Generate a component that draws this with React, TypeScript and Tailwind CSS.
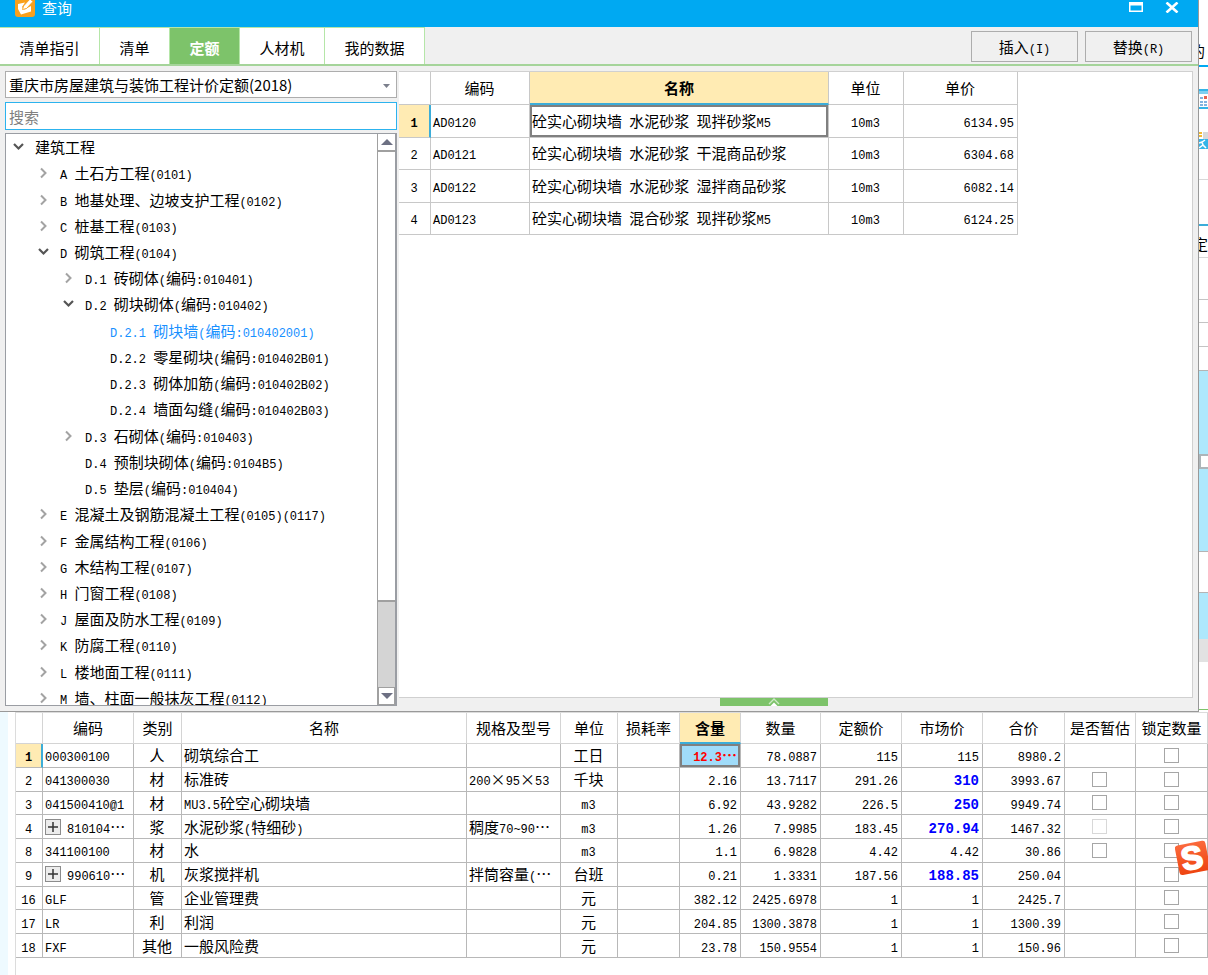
import React from "react";

type TreeNode = {
    label: string;
    level: number;
    state?: "open" | "closed";
    selected?: boolean;
};

const TREE: TreeNode[] = [
    { label: "建筑工程", level: 0, state: "open" },
    { label: "A 土石方工程(0101)", level: 1, state: "closed" },
    { label: "B 地基处理、边坡支护工程(0102)", level: 1, state: "closed" },
    { label: "C 桩基工程(0103)", level: 1, state: "closed" },
    { label: "D 砌筑工程(0104)", level: 1, state: "open" },
    { label: "D.1 砖砌体(编码:010401)", level: 2, state: "closed" },
    { label: "D.2 砌块砌体(编码:010402)", level: 2, state: "open" },
    { label: "D.2.1 砌块墙(编码:010402001)", level: 3, selected: true },
    { label: "D.2.2 零星砌块(编码:010402B01)", level: 3 },
    { label: "D.2.3 砌体加筋(编码:010402B02)", level: 3 },
    { label: "D.2.4 墙面勾缝(编码:010402B03)", level: 3 },
    { label: "D.3 石砌体(编码:010403)", level: 2, state: "closed" },
    { label: "D.4 预制块砌体(编码:0104B5)", level: 2 },
    { label: "D.5 垫层(编码:010404)", level: 2 },
    { label: "E 混凝土及钢筋混凝土工程(0105)(0117)", level: 1, state: "closed" },
    { label: "F 金属结构工程(0106)", level: 1, state: "closed" },
    { label: "G 木结构工程(0107)", level: 1, state: "closed" },
    { label: "H 门窗工程(0108)", level: 1, state: "closed" },
    { label: "J 屋面及防水工程(0109)", level: 1, state: "closed" },
    { label: "K 防腐工程(0110)", level: 1, state: "closed" },
    { label: "L 楼地面工程(0111)", level: 1, state: "closed" },
    { label: "M 墙、柱面一般抹灰工程(0112)", level: 1, state: "closed" },
];

const INDENT = ["pl-[7px]", "pl-[32px]", "pl-[57px]", "pl-[82px]"];

const TABS = [
    { label: "清单指引", width: "w-[100px]" },
    { label: "清单", width: "w-[70px]" },
    { label: "定额", width: "w-[70px]", active: true },
    { label: "人材机", width: "w-[85px]" },
    { label: "我的数据", width: "w-[100px]" },
];

const QUOTAS = [
    ["AD0120", "砼实心砌块墙 水泥砂浆 现拌砂浆M5", "10m3", "6134.95"],
    ["AD0121", "砼实心砌块墙 水泥砂浆 干混商品砂浆", "10m3", "6304.68"],
    ["AD0122", "砼实心砌块墙 水泥砂浆 湿拌商品砂浆", "10m3", "6082.14"],
    ["AD0123", "砼实心砌块墙 混合砂浆 现拌砂浆M5", "10m3", "6124.25"],
];

type Resource = {
    no: number;
    code: string;
    expandable?: boolean;
    kind: string;
    name: string;
    spec?: string;
    unit: string;
    content: string;
    amount: string;
    quotaPrice: string;
    marketPrice: string;
    adjusted?: boolean;
    total: string;
    estimate?: "on" | "disabled";
};

const RESOURCES: Resource[] = [
    { no: 1, code: "000300100", kind: "人", name: "砌筑综合工", unit: "工日", content: "12.3…", amount: "78.0887", quotaPrice: "115", marketPrice: "115", total: "8980.2" },
    { no: 2, code: "041300030", kind: "材", name: "标准砖", spec: "200×95×53", unit: "千块", content: "2.16", amount: "13.7117", quotaPrice: "291.26", marketPrice: "310", adjusted: true, total: "3993.67", estimate: "on" },
    { no: 3, code: "041500410@1", kind: "材", name: "MU3.5砼空心砌块墙", unit: "m3", content: "6.92", amount: "43.9282", quotaPrice: "226.5", marketPrice: "250", adjusted: true, total: "9949.74", estimate: "on" },
    { no: 4, code: "810104…", expandable: true, kind: "浆", name: "水泥砂浆(特细砂)", spec: "稠度70~90…", unit: "m3", content: "1.26", amount: "7.9985", quotaPrice: "183.45", marketPrice: "270.94", adjusted: true, total: "1467.32", estimate: "disabled" },
    { no: 8, code: "341100100", kind: "材", name: "水", unit: "m3", content: "1.1", amount: "6.9828", quotaPrice: "4.42", marketPrice: "4.42", total: "30.86", estimate: "on" },
    { no: 9, code: "990610…", expandable: true, kind: "机", name: "灰浆搅拌机", spec: "拌筒容量(…", unit: "台班", content: "0.21", amount: "1.3331", quotaPrice: "187.56", marketPrice: "188.85", adjusted: true, total: "250.04" },
    { no: 16, code: "GLF", kind: "管", name: "企业管理费", unit: "元", content: "382.12", amount: "2425.6978", quotaPrice: "1", marketPrice: "1", total: "2425.7" },
    { no: 17, code: "LR", kind: "利", name: "利润", unit: "元", content: "204.85", amount: "1300.3878", quotaPrice: "1", marketPrice: "1", total: "1300.39" },
    { no: 18, code: "FXF", kind: "其他", name: "一般风险费", unit: "元", content: "23.78", amount: "150.9554", quotaPrice: "1", marketPrice: "1", total: "150.96" },
];

const RESOURCE_HEADS = ["编码", "类别", "名称", "规格及型号", "单位", "损耗率", "含量", "数量", "定额价", "市场价", "合价", "是否暂估", "锁定数量"];

// Chinese at 15px, latin and digits in a smaller monospace
function Txt({ children }: { children: string }) {
    const parts = children.split(/([\x20-\x7e]+)/).filter(Boolean);
    return (
        <span className="whitespace-pre">
            {parts.map((part, i) =>
                /^[\x20-\x7e]+$/.test(part) ? (
                    <span key={i} className="font-['Liberation_Mono',monospace] text-[12px] leading-none">{part}</span>
                ) : (
                    part
                )
            )}
        </span>
    );
}

function Arrow({ state }: { state?: "open" | "closed" }) {
    if (!state) return <span className="w-[11px] shrink-0" />;
    return (
        <svg width="11" height="12" viewBox="0 0 11 12" fill="none" className="shrink-0">
            {state === "open" ? (
                <path d="M1 3l4.5 4.5L10 3" stroke="#555" strokeWidth="2.2" />
            ) : (
                <path d="M3 1.5L7.5 6 3 10.5" stroke="#a3a3a3" strokeWidth="2" />
            )}
        </svg>
    );
}

function TitleBar() {
    return (
        <header className="flex h-[27px] items-start bg-[#00a9f2] pr-[19px] pl-[15px] text-white">
            <svg width="20" height="17" viewBox="0 3 20 17">
                <rect width="20" height="20" rx="3" fill="#f9a01b" />
                <path d="M3 7l7-1.500-3 4.500 2.500 2.500L16 9v5.500L6 17.500 3 12z" fill="#fff" />
                <path d="M7.500 12.500l1-3.500L15 2l3 2.500-6.500 7z" fill="#fff" stroke="#f9a01b" strokeWidth="0.900" />
            </svg>
            <h1 className="ml-[7px] flex-1 text-[15px] leading-4">查询</h1>
            <button type="button" aria-label="最大化" className="mr-[22px] pt-[2px]">
                <svg width="14" height="10" viewBox="0 0 14 10">
                    <path d="M0 0h14v10H0zM1.500 3.500v5h11v-5z" fill="#fff" fillRule="evenodd" />
                </svg>
            </button>
            <button type="button" aria-label="关闭" className="pt-[2px]">
                <svg width="14" height="11" viewBox="0 0 14 11">
                    <path d="M1.500 0.500l11 10M12.500 0.500l-11 10" stroke="#fff" strokeWidth="2.600" />
                </svg>
            </button>
        </header>
    );
}

function TabBar() {
    return (
        <div className="flex h-[39px] items-stretch border-b-2 border-[#a5d49a] bg-[#f0f0f0] pr-[6px]">
            <nav className="flex flex-1">
                {TABS.map((tab) => (
                    <button
                        key={tab.label}
                        type="button"
                        className={`${tab.width} border-t border-r border-[#b5e6a8] pt-1 ${tab.active ? "bg-[#7dc36a] font-bold text-white" : "bg-white"}`}
                    >
                        {tab.label}
                    </button>
                ))}
            </nav>
            <div className="flex gap-[7px] pt-1 pb-[2px]">
                <button type="button" className="w-[107px] border border-[#adadad] bg-[#f0f0f0]"><Txt>插入(I)</Txt></button>
                <button type="button" className="w-[107px] border border-[#adadad] bg-[#f0f0f0]"><Txt>替换(R)</Txt></button>
            </div>
        </div>
    );
}

function ScrollBar() {
    return (
        <div className="flex w-[18px] shrink-0 flex-col border-l border-[#a0a0a0] bg-[#d4d4d4]">
            <button type="button" aria-label="向上" className="flex h-[18px] items-center justify-center border-b-2 border-[#a0a0a0] bg-white">
                <svg width="12" height="6" viewBox="0 0 12 6"><path d="M0 6l6-6 6 6z" fill="#6d7083" /></svg>
            </button>
            <div className="h-[450px] border-b-2 border-[#a0a0a0] bg-white" />
            <div className="flex-1" />
            <button type="button" aria-label="向下" className="flex h-[18px] items-center justify-center border border-[#a0a0a0] bg-white">
                <svg width="12" height="6" viewBox="0 0 12 6"><path d="M0 0l6 6 6-6z" fill="#6d7083" /></svg>
            </button>
        </div>
    );
}

function Sidebar() {
    return (
        <div className="flex w-[392px] shrink-0 flex-col">
            <div className="relative h-[27px] border border-[#adadad] bg-white">
                <select aria-label="定额库" className="h-full w-full appearance-none bg-transparent pl-[3px] text-[15px] outline-none">
                    <option>重庆市房屋建筑与装饰工程计价定额(2018)</option>
                </select>
                <svg width="7" height="4" viewBox="0 0 7 4" className="pointer-events-none absolute top-3 right-[6px]">
                    <path d="M0 0h7L3.500 4z" fill="#7b7f8c" />
                </svg>
            </div>
            <input
                type="text"
                aria-label="搜索"
                placeholder="搜索"
                className="mt-1 h-7 border border-[#2cb3ee] bg-white pl-[3px] text-[15px] outline-none placeholder:text-[#808080]"
            />
            <div className="mt-[3px] flex h-[573px] border border-r-2 border-[#9a9da3] bg-white">
                <div className="flex-1 overflow-hidden">
                    <ul className="grid h-[577px] auto-rows-fr">
                        {TREE.map((node) => (
                            <li key={node.label} className="flex">
                                <button
                                    type="button"
                                    className={`flex w-full items-center gap-[11px] ${INDENT[node.level]} ${node.selected ? "text-[#1890ff]" : ""}`}
                                >
                                    <Arrow state={node.state} />
                                    <Txt>{node.label}</Txt>
                                </button>
                            </li>
                        ))}
                    </ul>
                </div>
                <ScrollBar />
            </div>
        </div>
    );
}

const QCELL = "border-r border-b border-[#c8c8c8] pl-[2px] pr-[3px]";

function QuotaTable() {
    return (
        <table className="h-[163px] w-[619px] table-fixed border-separate border-spacing-0">
            <colgroup>
                <col className="w-[32px]" />
                <col className="w-[99px]" />
                <col />
                <col className="w-[75px]" />
                <col className="w-[114px]" />
            </colgroup>
            <thead>
                <tr className="h-[33px]">
                    <th className={QCELL} />
                    <th className={`${QCELL} font-normal`}>编码</th>
                    <th className="border-r border-b-2 border-r-[#c8c8c8] border-b-[#3cadd9] bg-[#ffebb3] font-bold">名称</th>
                    <th className={`${QCELL} font-normal`}>单位</th>
                    <th className={`${QCELL} font-normal`}>单价</th>
                </tr>
            </thead>
            <tbody>
                {QUOTAS.map(([code, name, unit, price], i) => (
                    <tr key={code}>
                        <td
                            className={
                                i === 0
                                    ? "border-r-2 border-b border-r-[#3cadd9] border-b-[#c8c8c8] bg-[#ffebb3] text-center font-bold"
                                    : `${QCELL} text-center`
                            }
                        >
                            <Txt>{String(i + 1)}</Txt>
                        </td>
                        <td className={QCELL}><Txt>{code}</Txt></td>
                        <td className={`${QCELL} ${i === 0 ? "shadow-[inset_0_0_0_2px_#808080]" : ""}`}><Txt>{name}</Txt></td>
                        <td className={`${QCELL} text-center`}><Txt>{unit}</Txt></td>
                        <td className={`${QCELL} text-right`}><Txt>{price}</Txt></td>
                    </tr>
                ))}
            </tbody>
        </table>
    );
}

function QueryDialog() {
    return (
        <section className="flex min-w-0 flex-1 flex-col border-r border-b border-[#999] bg-[#f0f0f0]">
            <TitleBar />
            <TabBar />
            <div className="flex gap-[2px] p-[5px]">
                <Sidebar />
                <div className="flex min-w-0 flex-1 flex-col">
                    <div className="flex-1 border border-l-0 border-[#d0d0d0] bg-white">
                        <QuotaTable />
                    </div>
                    <button type="button" aria-label="展开" className="ml-[321px] flex h-2 w-[108px] items-end justify-center bg-[#7dc36a]">
                        <svg width="12" height="8" viewBox="0 0 12 8" fill="none">
                            <path d="M1 6l5-5 5 5" stroke="#cdeac5" strokeWidth="1.300" />
                            <path d="M2.500 8L6 4.500 9.500 8z" fill="#fff" />
                        </svg>
                    </button>
                </div>
            </div>
        </section>
    );
}

// the slice of the main window that stays visible right of the dialog
function BackWindow() {
    return (
        <aside className="flex w-[9px] shrink-0 flex-col overflow-hidden bg-white">
            <div className="flex h-[65px] items-end justify-end pr-[3px] pb-1">的</div>
            <div className="h-[2px] bg-[#00a9f2]" />
            <svg width="9" height="112" viewBox="0 0 9 112">
                <path d="M0 23h9M0 41h9" stroke="#35b4e8" strokeWidth="2" />
                <path d="M0 24h9v3H0z" fill="#7fd0f0" />
                <path d="M1 31h3M1 35h3M1 38h3M5 35h3M5 38h3" stroke="#5b9bd5" strokeWidth="1.500" />
                <path d="M5 29h3v3H5z" fill="#e8604c" />
                <path d="M0 66h3M0 69h3" stroke="#f3b933" strokeWidth="2" />
                <path d="M4 65h5v7H4z" fill="#d8d8d8" />
                <path d="M0 72h9v10H0z" fill="#35b4e8" />
                <path d="M0 76l3-1 3-2M3 75l1 3 3 3M4 78l-4 3" stroke="#fff" strokeWidth="1.500" fill="none" />
            </svg>
            <div className="h-[45px] border-t border-[#d8d8d8]" />
            <div className="h-[2px] bg-[#3cadd9]" />
            <div className="flex h-8 items-center justify-end border-b border-[#d8d8d8] pt-1">定</div>
            <div className="h-[42px] border-b border-[#c4c4c4]" />
            <div className="h-[23px] border-b border-[#c4c4c4]" />
            <div className="h-6 border-b border-[#c4c4c4]" />
            <div className="h-6 border-b border-[#b4b4b4]" />
            <div className="h-[83px] bg-[#aee8fc]" />
            <div className="h-[15px] border-2 border-r-0 border-[#adb5b9] bg-white" />
            <div className="h-[83px] border-b border-[#b4b4b4] bg-[#aee8fc]" />
            <div className="h-[41px] border-b border-[#b4b4b4]" />
            <div className="h-[46px] bg-[#aee8fc]" />
            <div className="h-[23px] bg-[#e2e2e2]" />
            <div className="flex-1" />
            <div className="mb-[2px] h-px bg-[#7dc36a]" />
        </aside>
    );
}

const CELL = "border-r border-b border-[#b8b8b8] pl-[2px] pr-[3px]";
const HEAD = "border-r border-b border-[#d4d4d4] font-normal whitespace-nowrap";
const CHECK = "block mx-auto size-[15px] appearance-none border border-[#a6a6a6] bg-white disabled:border-[#d8d8d8]";

function ResourceTable() {
    return (
        <table className="h-[245px] w-full table-fixed border-separate border-spacing-0">
            <colgroup>
                <col className="w-[27px]" />
                <col className="w-[91px]" />
                <col className="w-[48px]" />
                <col />
                <col className="w-[94px]" />
                <col className="w-[57px]" />
                <col className="w-[62px]" />
                <col className="w-[61px]" />
                <col className="w-[80px]" />
                <col className="w-[81px]" />
                <col className="w-[81px]" />
                <col className="w-[82px]" />
                <col className="w-[71px]" />
                <col className="w-[72px]" />
            </colgroup>
            <thead>
                <tr className="h-[31px]">
                    <th className={HEAD} />
                    {RESOURCE_HEADS.map((head) => (
                        <th
                            key={head}
                            className={head === "含量" ? "border-r border-b-2 border-r-[#d4d4d4] border-b-[#3cadd9] bg-[#ffebb3] font-bold" : HEAD}
                        >
                            {head}
                        </th>
                    ))}
                </tr>
            </thead>
            <tbody>
                {RESOURCES.map((row) => (
                    <tr key={row.no}>
                        <td
                            className={
                                row.no === 1
                                    ? "border-r-2 border-b border-r-[#3cadd9] border-b-[#b8b8b8] bg-[#ffebb3] text-center font-bold"
                                    : `${CELL} text-center`
                            }
                        >
                            <Txt>{String(row.no)}</Txt>
                        </td>
                        <td className={CELL}>
                            <div className="flex items-center gap-[6px]">
                                {row.expandable && (
                                    <button type="button" aria-label="展开" className="flex size-4 items-center justify-center border border-[#8c8c8c] bg-[#ececec]">
                                        <svg width="10" height="10" viewBox="0 0 10 10"><path d="M5 0v10M0 5h10" stroke="#333" strokeWidth="1.500" /></svg>
                                    </button>
                                )}
                                <Txt>{row.code}</Txt>
                            </div>
                        </td>
                        <td className={`${CELL} text-center`}>{row.kind}</td>
                        <td className={CELL}><Txt>{row.name}</Txt></td>
                        <td className={CELL}>{row.spec && <Txt>{row.spec}</Txt>}</td>
                        <td className={`${CELL} text-center`}><Txt>{row.unit}</Txt></td>
                        <td className={CELL} />
                        <td
                            className={`${CELL} text-right ${row.no === 1 ? "bg-[#a0dcfa] font-bold text-[#ff0000] shadow-[inset_0_0_0_2px_#808080]" : ""}`}
                        >
                            <Txt>{row.content}</Txt>
                        </td>
                        <td className={`${CELL} text-right`}><Txt>{row.amount}</Txt></td>
                        <td className={`${CELL} text-right`}><Txt>{row.quotaPrice}</Txt></td>
                        <td className={`${CELL} text-right`}>
                            {row.adjusted ? (
                                <span className="font-['Liberation_Mono',monospace] text-[14px] leading-none font-bold text-[#0000ff]">{row.marketPrice}</span>
                            ) : (
                                <Txt>{row.marketPrice}</Txt>
                            )}
                        </td>
                        <td className={`${CELL} text-right`}><Txt>{row.total}</Txt></td>
                        <td className={CELL}>
                            {row.estimate && <input type="checkbox" aria-label={`是否暂估 ${row.name}`} disabled={row.estimate === "disabled"} className={CHECK} />}
                        </td>
                        <td className={CELL}>
                            <input type="checkbox" aria-label={`锁定数量 ${row.name}`} className={CHECK} />
                        </td>
                    </tr>
                ))}
            </tbody>
        </table>
    );
}

export default function App() {
    return (
        <div lang="zh-CN" className="flex min-h-screen flex-col overflow-hidden bg-white font-['Noto_Sans_CJK_SC',sans-serif] text-[15px] leading-5 text-black">
            <div className="flex">
                <QueryDialog />
                <BackWindow />
            </div>
            <div className="flex flex-1">
                <div className="w-2 bg-[#eefaff]" />
                <div className="relative ml-[7px] min-w-0 flex-1 border-t border-l border-[#dcdcdc]">
                    <ResourceTable />
                    <svg width="33" height="36" viewBox="0 0 33 36" className="absolute top-[127px] right-0">
                        <defs>
                            <linearGradient id="tile" x1="0" y1="0" x2="0" y2="1">
                                <stop offset="0" stopColor="#fb6a3c" />
                                <stop offset="1" stopColor="#ee4410" />
                            </linearGradient>
                        </defs>
                        <g transform="rotate(-11 17 18)">
                            <rect x="2" y="3" width="31" height="30" rx="3" fill="url(#tile)" />
                            <text x="17" y="29" textAnchor="middle" fontFamily="Liberation Sans, sans-serif" fontWeight="bold" fontSize="32" fill="#fff" stroke="#fff" strokeWidth="2">S</text>
                        </g>
                    </svg>
                </div>
            </div>
        </div>
    );
}
